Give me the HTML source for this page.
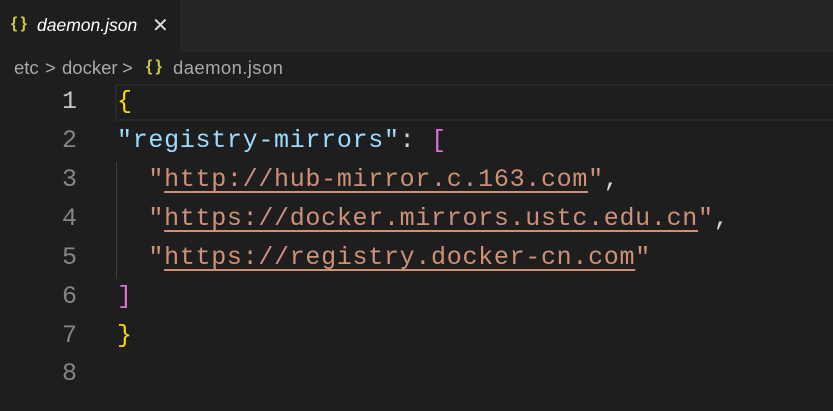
<!DOCTYPE html><html><head><style>
body{margin:0;width:833px;height:411px;background:#1e1e1e;overflow:hidden;font-family:"Liberation Sans",sans-serif}
.tabs{position:absolute;left:0;top:0;width:833px;height:52px;background:#252526}
.tab{position:absolute;left:0;top:0;width:180px;height:52px;background:#1e1e1e;color:#fff}
.tab .ic{position:absolute;left:11px;top:15px;color:#cbcb41;font-size:16px;font-weight:bold;word-spacing:-1px}
.tab .nm{position:absolute;left:37px;top:15px;font-style:italic;font-size:17.5px}
.tab .x{position:absolute;left:152px;top:13px;font-size:20px;color:#ddd}
.bc{position:absolute;top:57px;color:#a9a9a9;font-size:18.5px}
.bc.ic{color:#cbcb41;font-weight:bold;font-size:16px;top:58px;word-spacing:-1px}
.cl{position:absolute;left:115px;top:84px;width:720px;height:37px;border:2px solid #282828;box-sizing:border-box}
.ln{position:absolute;left:0;width:77px;text-align:right;color:#858585;font-family:"Liberation Mono",monospace;font-size:25px}
.code{position:absolute;left:117px;font-family:"Liberation Mono",monospace;font-size:25px;letter-spacing:0.7px;white-space:pre;color:#d4d4d4}
.k{color:#9cdcfe}.s{color:#ce9178}.y{color:#ffd700}.p{color:#da70d6}
.u{text-decoration:underline;text-underline-offset:5px;text-decoration-thickness:2px}
.g{position:absolute;left:116px;top:162px;width:1px;height:117px;background:#404040}
</style></head><body>
<div class="tabs"><div class="tab"><span class="ic">{ }</span><span class="nm">daemon.json</span><span class="x">✕</span></div></div>
<div class="bc" style="left:14px">etc</div>
<div class="bc" style="left:45px">&gt;</div>
<div class="bc" style="left:62px">docker</div>
<div class="bc" style="left:122px">&gt;</div>
<div class="bc ic" style="left:146px">{ }</div>
<div class="bc" style="left:173px;letter-spacing:0.4px">daemon.json</div>
<div class="cl"></div><div class="g"></div>
<div class="ln" style="top:87px;color:#c6c6c6">1</div>
<div class="ln" style="top:126px">2</div>
<div class="ln" style="top:165px">3</div>
<div class="ln" style="top:204px">4</div>
<div class="ln" style="top:243px">5</div>
<div class="ln" style="top:282px">6</div>
<div class="ln" style="top:321px">7</div>
<div class="ln" style="top:359px">8</div>
<div class="code" style="top:87px"><span class="y">{</span></div>
<div class="code" style="top:126px"><span class="k">"registry-mirrors"</span>: <span class="p">[</span></div>
<div class="code" style="top:165px">  <span class="s">"<span class="u">http://hub-mirror.c.163.com</span>"</span>,</div>
<div class="code" style="top:204px">  <span class="s">"<span class="u">https://docker.mirrors.ustc.edu.cn</span>"</span>,</div>
<div class="code" style="top:243px">  <span class="s">"<span class="u">https://registry.docker-cn.com</span>"</span></div>
<div class="code" style="top:282px"><span class="p">]</span></div>
<div class="code" style="top:321px"><span class="y">}</span></div>
</body></html>
